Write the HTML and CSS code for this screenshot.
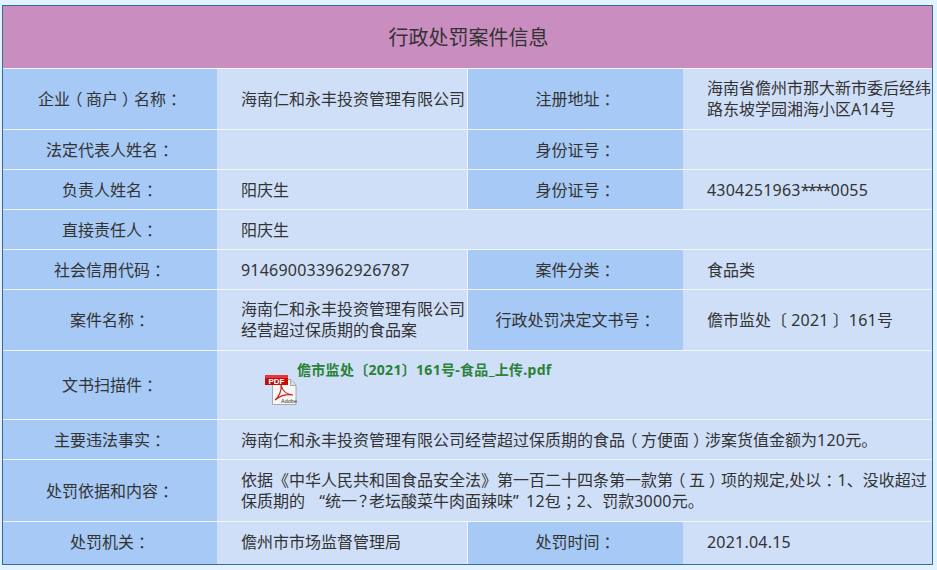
FILE: index.html
```html
<!DOCTYPE html>
<html lang="zh-CN">
<head>
<meta charset="utf-8">
<title>行政处罚案件信息</title>
<link rel="stylesheet" href="styles.css">
</head>
<body>
<table class="info">
  <colgroup>
    <col class="c-label"><col class="c-value"><col class="c-label2"><col class="c-value2">
  </colgroup>
  <tr class="h-title"><th colspan="4" class="title">行政处罚案件信息</th></tr>
  <tr class="h-60">
    <td class="label">企业<span class="po">（</span>商户<span class="pc">）</span>名称<span class="pc">：</span></td><td class="value">海南仁和永丰投资管理有限公司</td>
    <td class="label">注册地址<span class="pc">：</span></td><td class="value">海南省儋州市那大新市委后经纬路东坡学园湘海小区A14号</td>
  </tr>
  <tr class="h-39">
    <td class="label">法定代表人姓名<span class="pc">：</span></td><td class="value"></td>
    <td class="label">身份证号<span class="pc">：</span></td><td class="value"></td>
  </tr>
  <tr class="h-39">
    <td class="label">负责人姓名<span class="pc">：</span></td><td class="value">阳庆生</td>
    <td class="label">身份证号<span class="pc">：</span></td><td class="value"><span class="num">4304251963</span><span class="stars">****</span><span class="num">0055</span></td>
  </tr>
  <tr class="h-39">
    <td class="label">直接责任人<span class="pc">：</span></td><td class="value" colspan="3">阳庆生</td>
  </tr>
  <tr class="h-39">
    <td class="label">社会信用代码<span class="pc">：</span></td><td class="value"><span class="num">914690033962926787</span></td>
    <td class="label">案件分类<span class="pc">：</span></td><td class="value">食品类</td>
  </tr>
  <tr class="h-60">
    <td class="label">案件名称<span class="pc">：</span></td><td class="value">海南仁和永丰投资管理有限公司经营超过保质期的食品案</td>
    <td class="label">行政处罚决定文书号<span class="pc">：</span></td><td class="value">儋市监处〔 <span class="num">2021</span> 〕<span class="num">161</span>号</td>
  </tr>
  <tr class="h-68">
    <td class="label">文书扫描件<span class="pc">：</span></td>
    <td class="value file" colspan="3">
      <div class="file-row">
        <svg class="pdf" width="32" height="31" viewBox="0 0 32 31" aria-hidden="true">
          <path d="M7.5 4.5H26L31 10V29.5H7.5Z" fill="#f6f6f6" stroke="#a8a8a8"/>
          <path d="M25.5 4.5V10.5H31" fill="#dcdcdc" stroke="#a8a8a8"/>
          <path d="M10 25C14 22 17 15 16 10C17 15 20 19 28 20C22 19 15 21 10 25Z" fill="none" stroke="#c8201c" stroke-width="1.2"/>
          <rect x="0" y="0" width="23" height="10" fill="#c40d0d"/>
          <rect x="0" y="0" width="23" height="3" fill="#e23a3a"/>
          <text x="11.5" y="8.5" class="pdf-tag">PDF</text>
          <text x="24" y="28" class="pdf-adobe">Adobe</text>
        </svg>
        <a class="file-link" href="#">儋市监处〔2021〕161号-食品_上传.pdf</a>
      </div>
    </td>
  </tr>
  <tr class="h-39">
    <td class="label">主要违法事实<span class="pc">：</span></td><td class="value" colspan="3">海南仁和永丰投资管理有限公司经营超过保质期的食品<span class="po">（</span>方便面<span class="pc">）</span>涉案货值金额为<span class="num">120</span>元。</td>
  </tr>
  <tr class="h-61">
    <td class="label">处罚依据和内容<span class="pc">：</span></td><td class="value" colspan="3">依据《中华人民共和国食品安全法》第一百二十四条第一款第<span class="po">（</span>五<span class="pc">）</span>项的规定,处以<span class="pc">：</span><span class="num">1</span>、没收超过保质期的<span class="qo">“</span>统一<span class="pq">？</span>老坛酸菜牛肉面辣味<span class="qc">”</span><span class="num">12</span>包<span class="pc">；</span><span class="num">2</span>、罚款<span class="num">3000</span>元。</td>
  </tr>
  <tr class="h-41">
    <td class="label">处罚机关<span class="pc">：</span></td><td class="value">儋州市市场监督管理局</td>
    <td class="label">处罚时间<span class="pc">：</span></td><td class="value"><span class="num">2021.04.15</span></td>
  </tr>
</table>
</body>
</html>
```
FILE: styles.css
```css
html, body { margin: 0; padding: 0; }
body {
  background: #e3f2fe;
  padding: 5px 0 0 2px;
  font-family: "Noto Sans", "Noto Sans CJK SC", sans-serif;
  font-size: 16px;
  color: #333;
}
.info {
  width: 931px;
  table-layout: fixed;
  border-collapse: separate;
  border-spacing: 0;
  border: 1px solid #2f6f9f;
}
.c-label { width: 214px; }
.c-value { width: 251px; }
.c-label2 { width: 215px; }
.c-value2 { width: 249px; }
.info td, .info th { padding: 0; line-height: 21px; border-bottom: 1px solid #f2f7fd; }
.info tr:last-child td { border-bottom: 0; }
.title {
  background: #ca8dc0;
  font-size: 20px;
  font-weight: 400;
  text-align: center;
  padding-left: 2px !important;
}
.label { background: #a6c9f5; text-align: center; }
.value { background: #cfdff8; padding-left: 24px !important; }
.value:not(:last-child) { border-right: 1px solid #f2f7fd; }
.h-title { height: 63px; }
.h-60 { height: 61px; }
.h-39 { height: 40px; }
.h-68 { height: 69px; }
.h-61 { height: 62px; }
.h-41 { height: 42px; }
.info .h-39 td { padding-top: 2px; }
.info .h-61 .label { padding-top: 2px; }
.info .h-41 td { padding-bottom: 2px; }
.po, .pc, .pq { display: inline-block; }
.po { transform: translateX(-3.5px); }
.pc { transform: translateX(4px); }
.pq { width: 12px; transform: translateX(2px); }
.qo, .qc { display: inline-block; }
.qo { width: 20px; text-align: right; }
.qc { width: 13px; }
.num { letter-spacing: 0.22px; }
.stars { letter-spacing: -1.6px; margin-right: 1px; }
.file { vertical-align: top; }
.file-row { display: flex; align-items: flex-start; margin-left: 24px; padding-top: 9px; }
.pdf { flex: none; margin-top: 15px; }
.pdf-tag { font: bold 8px "Liberation Sans", sans-serif; fill: #fff; text-anchor: middle; }
.pdf-adobe { font: 5.5px "Liberation Sans", sans-serif; fill: #333; text-anchor: middle; }
.file-link {
  font-size: 14px;
  font-weight: 700;
  line-height: 20px;
  letter-spacing: 0.3px;
  color: #2a8236;
  text-decoration: none;
}
```
